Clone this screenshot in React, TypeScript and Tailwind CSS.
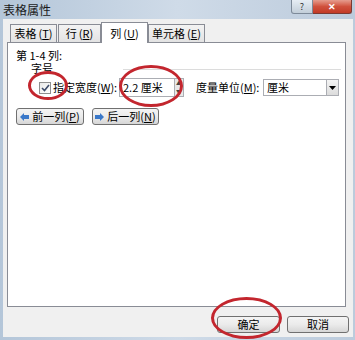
import { ReactNode } from 'react'

const font = { fontFamily: '"Noto Sans CJK SC", "Noto Sans", sans-serif' }

function Tab({ label, hot, active, w }: { label: string; hot: string; active?: boolean; w: string }) {
  return (
    <div
      className={`
        ${w} flex items-center justify-center whitespace-nowrap border border-[#898c95] border-b-0 text-[11px] leading-none
        ${active ? 'h-[21px] bg-white -mb-px relative z-10' : 'h-[18px] bg-gradient-to-b from-[#f3f3f3] to-[#e3e3e3]'}
      `}
    >
      {label}
      <span className="ml-[2px]">(<span className="underline">{hot}</span>)</span>
    </div>
  )
}

function WinButton({ children, w, className = '' }: { children: ReactNode; w: string; className?: string }) {
  return (
    <div
      className={`${w} h-[17px] flex items-center justify-center gap-[3px] whitespace-nowrap rounded-[3px] border border-[#707070] bg-gradient-to-b from-[#f4f4f4] via-[#ebebeb] to-[#d6d6d6] text-[11px] leading-none ${className}`}
    >
      {children}
    </div>
  )
}

function Arrow({ dir }: { dir: 'left' | 'right' }) {
  return (
    <svg width="9" height="8" viewBox="0 0 9 8" className="shrink-0">
      {dir === 'left' ? (
        <path d="M0 4 L4 0 L4 2 L9 2 L9 6 L4 6 L4 8 Z" fill="#3a78c9" />
      ) : (
        <path d="M9 4 L5 0 L5 2 L0 2 L0 6 L5 6 L5 8 Z" fill="#3a78c9" />
      )}
    </svg>
  )
}

function Ellipse({ className }: { className: string }) {
  return <div className={`absolute rounded-[50%] border-[3px] border-[#c3262e] pointer-events-none z-20 ${className}`} />
}

export default function App() {
  return (
    <div className="relative w-[355px] h-[340px] overflow-hidden bg-gradient-to-r from-[#b4c6d9] via-[#cfdbe8] to-[#bccbdc] text-black" style={font}>
      {/* Title bar */}
      <div className="h-[19px] flex items-start justify-between">
        <span className="pl-[3px] pt-[2px] text-[12px] leading-[15px] text-[#1a1a1a] whitespace-nowrap">表格属性</span>
        <div className="flex mr-[3px]">
          <div className="w-[22px] h-[14px] flex items-center justify-center rounded-bl-[3px] border border-t-0 border-[#7d8a99] bg-gradient-to-b from-[#e6edf4] to-[#c2ced9] text-[9px] leading-[10px] text-[#333]">?</div>
          <div className="w-[39px] h-[14px] flex items-center justify-center rounded-br-[3px] border border-t-0 border-l-0 border-[#7a3a33] bg-gradient-to-b from-[#e59c8e] via-[#d0513d] to-[#c23a26] text-[9px] leading-[10px] font-bold text-white">✕</div>
        </div>
      </div>

      {/* Client area */}
      <div className="ml-[3px] mr-[2px] h-[318px] bg-[#f0f0f0] pl-[4px] pr-[4px] pt-[2px] flex flex-col">
        {/* Tabs */}
        <div className="flex items-end h-[21px] pl-[3px]">
          <Tab label="表格" hot="T" w="w-[47px]" />
          <Tab label="行" hot="R" w="w-[43px] ml-[1px]" />
          <Tab label="列" hot="U" w="w-[47px]" active />
          <Tab label="单元格" hot="E" w="w-[57px]" />
        </div>

        {/* Panel */}
        <div className="w-[339px] h-[265px] bg-white border border-[#898c95] pl-[8px] pt-[6px] text-[11px] leading-[13px] whitespace-nowrap">
          <div>第 1-4 列:</div>
          <div className="flex items-center">
            <span className="pl-[15px]">字号</span>
            <div className="flex-1 h-px bg-[#dcdcdc] ml-[70px] mr-[4px] mt-[2px]" />
          </div>

          <div className="flex items-center h-[19px] mt-[3px] pl-[23px]">
            <div className="w-[12px] h-[12px] shrink-0 border border-[#8e8f8f] bg-gradient-to-br from-[#e9e9e9] to-white flex items-center justify-center">
              <svg width="9" height="8" viewBox="0 0 9 8">
                <path d="M1 4 L3.5 6.5 L8 1" stroke="#3c4b6a" strokeWidth="1.6" fill="none" />
              </svg>
            </div>
            <span className="ml-[2px] w-[66px]">指定宽度(<span className="underline">W</span>):</span>
            <div className="w-[56px] h-[19px] shrink-0 border border-[#abadb3] flex items-center pl-[3px]">2.2 厘米</div>
            <div className="w-[9px] h-[19px] shrink-0 flex flex-col border border-l-0 border-[#abadb3] bg-[#e8e8e8]">
              <div className="flex-1 flex items-center justify-center text-[6px] leading-none text-[#444]">▲</div>
              <div className="flex-1 flex items-center justify-center text-[6px] leading-none text-[#444]">▼</div>
            </div>
            <span className="ml-[12px] w-[67px]">度量单位(<span className="underline">M</span>):</span>
            <div className="w-[76px] h-[17px] shrink-0 border border-[#abadb3] flex items-center pl-[3px] justify-between">
              <span>厘米</span>
              <div className="w-[12px] h-[15px] flex items-center justify-center border-l border-[#abadb3] bg-gradient-to-b from-[#f4f4f4] to-[#dcdcdc]">
                <svg width="7" height="4" viewBox="0 0 7 4"><path d="M0 0 L7 0 L3.5 4 Z" fill="#000" /></svg>
              </div>
            </div>
          </div>

          <div className="flex gap-[8px] mt-[11px]">
            <WinButton w="w-[68px]">
              <Arrow dir="left" />
              <span>前一列(<span className="underline">P</span>)</span>
            </WinButton>
            <WinButton w="w-[67px]">
              <Arrow dir="right" />
              <span>后一列(<span className="underline">N</span>)</span>
            </WinButton>
          </div>
        </div>

        {/* Bottom buttons */}
        <div className="flex justify-end gap-[7px] mt-[9px]">
          <WinButton w="w-[63px]" className="border-[#3c7fb1]">确定</WinButton>
          <WinButton w="w-[62px]">取消</WinButton>
        </div>
      </div>

      <Ellipse className="left-[28px] top-[71px] w-[40px] h-[29px]" />
      <Ellipse className="left-[119px] top-[65px] w-[64px] h-[42px]" />
      <Ellipse className="left-[211px] top-[297px] w-[71px] h-[42px]" />
    </div>
  )
}
